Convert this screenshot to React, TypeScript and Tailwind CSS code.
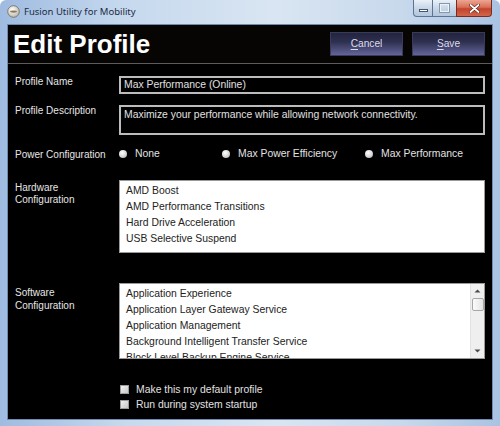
const hardware = [
  'AMD Boost',
  'AMD Performance Transitions',
  'Hard Drive Acceleration',
  'USB Selective Suspend',
];

const software = [
  'Application Experience',
  'Application Layer Gateway Service',
  'Application Management',
  'Background Intelligent Transfer Service',
  'Block Level Backup Engine Service',
];

const powerOptions = [
  { label: 'None', width: 'w-[103px]' },
  { label: 'Max Power Efficiency', width: 'w-[143px]' },
  { label: 'Max Performance', width: 'flex-1' },
];

function AppIcon() {
  return (
    <svg width="13" height="13" viewBox="0 0 13 13">
      <defs>
        <radialGradient id="ic" cx="40%" cy="35%" r="70%">
          <stop offset="0%" stopColor="#ffffff" />
          <stop offset="100%" stopColor="#b9b4a6" />
        </radialGradient>
      </defs>
      <circle cx="6.5" cy="6.5" r="5.8" fill="url(#ic)" stroke="#6f6a60" strokeWidth="0.8" />
      <ellipse cx="6.5" cy="6.6" rx="3.4" ry="1.1" fill="#8c7b52" />
    </svg>
  );
}

function WindowControls() {
  return (
    <div className="flex h-[17px] mr-[8px] self-start">
      <div className="w-[20px] h-full flex items-center justify-center border border-[#5d7391] border-t-0 rounded-bl-[4px] bg-[linear-gradient(180deg,#e9f0f8_0%,#c9d7e7_50%,#b3c6dc_100%)]">
        <div className="w-[9px] h-[3px] mt-[4px] bg-white border border-[#44546a]" />
      </div>
      <div className="w-[23px] h-full flex items-center justify-center border-b border-[#5d7391] bg-[linear-gradient(180deg,#e9f0f8_0%,#c9d7e7_50%,#b3c6dc_100%)]">
        <div className="w-[9px] h-[8px] border border-[#eef3f9] outline outline-1 outline-[#8597ad]" />
      </div>
      <div className="w-[36px] h-full flex items-center justify-center border border-[#7a2a1e] border-t-0 rounded-br-[4px] bg-[linear-gradient(180deg,#eca593_0%,#d86f58_45%,#c4432c_55%,#d2664a_100%)]">
        <svg width="11" height="9" viewBox="0 0 11 9">
          <path d="M1.5 1 L9.5 8 M9.5 1 L1.5 8" stroke="#5a1c12" strokeWidth="3" strokeLinecap="round" />
          <path d="M1.5 1 L9.5 8 M9.5 1 L1.5 8" stroke="#ffffff" strokeWidth="1.8" strokeLinecap="round" />
        </svg>
      </div>
    </div>
  );
}

function DarkButton({ hot, rest }: { hot: string; rest: string }) {
  return (
    <button className="w-[73px] h-[24px] flex items-center justify-center border border-[#3a3b5a] bg-[linear-gradient(180deg,#23243d_0%,#2e3050_40%,#4d4f7a_75%,#63649a_100%)] text-[10.2px] text-[#dcdcec]">
      <span className="underline underline-offset-[2px]">{hot}</span>
      {rest}
    </button>
  );
}

function Radio({ label, width }: { label: string; width: string }) {
  return (
    <div className={`${width} flex items-center gap-[8px]`}>
      <span className="w-[8px] h-[8px] rounded-full bg-[radial-gradient(circle_at_40%_35%,#ffffff_0%,#d6d6d6_55%,#9c9c9c_100%)]" />
      <span className="text-[10.4px] text-[#e2e2e2]">{label}</span>
    </div>
  );
}

function Check({ label }: { label: string }) {
  return (
    <div className="h-[15px] flex items-center">
      <div className="w-[111px] shrink-0" />
      <span className="ml-[1px] w-[9px] h-[9px] border border-[#9c9c9c] bg-[linear-gradient(135deg,#f2f2f2_0%,#c8c8c8_100%)]" />
      <span className="ml-[7px] text-[10.4px] text-[#e2e2e2]">{label}</span>
    </div>
  );
}

function Arrow({ up }: { up?: boolean }) {
  return (
    <div className="h-[14px] w-full flex items-center justify-center">
      <svg width="7" height="4" viewBox="0 0 7 4">
        <path d={up ? 'M0.5 3.5 L3.5 0.5 L6.5 3.5 Z' : 'M0.5 0.5 L3.5 3.5 L6.5 0.5 Z'} fill="#4a4a4a" />
      </svg>
    </div>
  );
}

export default function App() {
  return (
    <div className="w-[500px] h-[426px] flex flex-col overflow-hidden rounded-t-[6px] font-['Liberation_Sans',Arial,sans-serif] bg-[linear-gradient(90deg,#9fbbe0_0%,#c6d9ee_25%,#d9e5f2_55%,#c8d9ec_80%,#a9c3e3_100%)]">
      {/* Title bar */}
      <div className="h-[25px] shrink-0 flex items-start">
        <div className="ml-[7px] mt-[5px]">
          <AppIcon />
        </div>
        <span className="ml-[4px] mt-[5px] font-['Noto_Sans',sans-serif] text-[9.5px] leading-[14px] text-[#1c2b43]">
          Fusion Utility for Mobility
        </span>
        <div className="ml-auto">
          <WindowControls />
        </div>
      </div>

      {/* Client area */}
      <div className="flex-1 mx-[8px] mb-[7px] bg-black flex flex-col outline outline-1 outline-[#6f8bb0]">
        <div className="h-[38px] shrink-0 flex items-center justify-between pl-[5px] pr-[7px] bg-[#070404]">
          <h1 className="font-bold text-[26px] leading-none text-white">Edit Profile</h1>
          <div className="flex gap-[9px]">
            <DarkButton hot="C" rest="ancel" />
            <DarkButton hot="S" rest="ave" />
          </div>
        </div>
        <div className="h-px bg-[#5c5c5c]" />

        <div className="flex flex-col pt-[12px] pr-[7px] text-[10px]">
          {/* Profile name */}
          <div className="flex items-start">
            <div className="w-[111px] shrink-0 pl-[7px] leading-[12px] text-[#e6e6e6]">Profile Name</div>
            <div className="flex-1 h-[18px] border-2 border-[#bcbcbc] flex items-center pl-[3px] text-[10.4px] text-[#e0e0e0]">
              Max Performance (Online)
            </div>
          </div>

          {/* Description */}
          <div className="flex items-start mt-[11px]">
            <div className="w-[111px] shrink-0 pl-[7px] leading-[12px] text-[#e6e6e6]">Profile Description</div>
            <div className="flex-1 h-[30px] border-2 border-[#bcbcbc] pl-[3px] pt-[1px] leading-[13px] text-[10.4px] text-[#e0e0e0]">
              Maximize your performance while allowing network connectivity.
            </div>
          </div>

          {/* Power */}
          <div className="flex items-center mt-[12px] h-[14px]">
            <div className="w-[111px] shrink-0 pl-[7px] text-[#e6e6e6]">Power Configuration</div>
            <div className="flex-1 flex items-center">
              {powerOptions.map((o) => (
                <Radio key={o.label} label={o.label} width={o.width} />
              ))}
            </div>
          </div>

          {/* Hardware */}
          <div className="flex items-start mt-[19px]">
            <div className="w-[111px] shrink-0 pl-[7px] pt-[2px] leading-[12px] text-[#e6e6e6]">
              Hardware
              <br />
              Configuration
            </div>
            <div className="flex-1 h-[73px] bg-white border border-[#9a9a9a] pl-[6px] pt-[2px] text-[10.4px] leading-[16px] text-[#222]">
              {hardware.map((h) => (
                <div key={h}>{h}</div>
              ))}
            </div>
          </div>

          {/* Software */}
          <div className="flex items-start mt-[30px]">
            <div className="w-[111px] shrink-0 pl-[7px] pt-[4px] leading-[12.5px] text-[#e6e6e6]">
              Software
              <br />
              Configuration
            </div>
            <div className="flex-1 h-[76px] bg-white border border-[#9a9a9a] flex overflow-hidden">
              <div className="flex-1 pl-[6px] pt-[2px] text-[10.4px] leading-[16px] text-[#222] overflow-hidden whitespace-nowrap">
                {software.map((s) => (
                  <div key={s}>{s}</div>
                ))}
              </div>
              <div className="w-[14px] shrink-0 bg-[#efefef] border-l border-[#e2e2e2] flex flex-col items-center">
                <Arrow up />
                <div className="w-[12px] h-[13px] rounded-[2px] border border-[#a7a7a7] bg-[linear-gradient(90deg,#fbfbfb_0%,#e4e4e4_100%)]" />
                <div className="flex-1" />
                <Arrow />
              </div>
            </div>
          </div>

          {/* Options */}
          <div className="mt-[23px]">
            <Check label="Make this my default profile" />
            <Check label="Run during system startup" />
          </div>
        </div>
      </div>
    </div>
  );
}
